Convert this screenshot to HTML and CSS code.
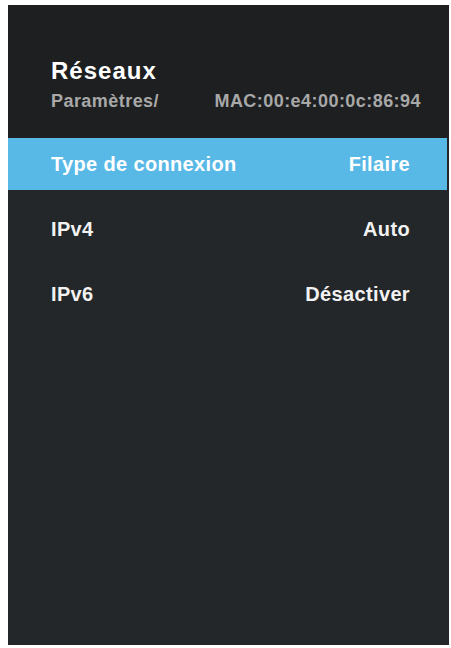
FILE: index.html
```html
<!DOCTYPE html>
<html lang="fr">
<head>
<meta charset="utf-8">
<title>Réseaux</title>
<link rel="stylesheet" href="styles.css">
</head>
<body>
<div class="panel">
  <header class="header">
    <h1 class="title">Réseaux</h1>
    <div class="sub">
      <span>Paramètres/</span>
      <span>MAC:00:e4:00:0c:86:94</span>
    </div>
  </header>
  <ul class="list">
    <li class="row selected"><span>Type de connexion</span><span>Filaire</span></li>
    <li class="row"><span>IPv4</span><span>Auto</span></li>
    <li class="row"><span>IPv6</span><span>Désactiver</span></li>
  </ul>
</div>
</body>
</html>
```
FILE: styles.css
```css
html, body {
  margin: 0;
  padding: 0;
  background: #ffffff;
}
body {
  padding: 5px 2px 3px 8px;
  font-family: "Liberation Sans", Arial, sans-serif;
}
.panel {
  width: 441px;
  height: 640px;
  background: #232729;
  display: flex;
  flex-direction: column;
}
.header {
  background: #1e1f20;
  padding: 52px 28px 26px 43px;
}
.title {
  margin: 0;
  font-size: 24px;
  line-height: 27px;
  font-weight: bold;
  letter-spacing: 1px;
  color: #ffffff;
}
.sub {
  margin-top: 6px;
  display: flex;
  justify-content: space-between;
  font-size: 18px;
  line-height: 22px;
  font-weight: bold;
  letter-spacing: 0.45px;
  color: #a8a8a8;
}
.list {
  list-style: none;
  margin: 0;
  padding: 0;
  display: flex;
  flex-direction: column;
  gap: 13px;
}
.row {
  height: 52px;
  margin-right: 2px;
  padding: 0 37px 0 43px;
  display: flex;
  align-items: center;
  justify-content: space-between;
  font-size: 20px;
  font-weight: bold;
  letter-spacing: 0.35px;
  color: #f2f2f2;
}
.row.selected {
  background: #58b8e6;
  color: #ffffff;
}
```
